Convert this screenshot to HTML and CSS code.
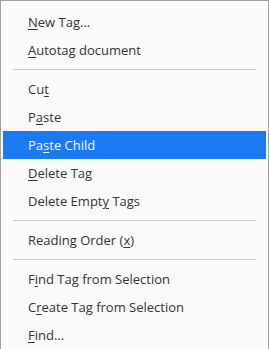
FILE: index.html
```html
<!DOCTYPE html>
<html lang="en">
<head>
    <meta charset="UTF-8">
    <meta name="viewport" content="width=device-width, initial-scale=1.0">
    <title>Tag menu</title>
    <link rel="stylesheet" href="styles.css">
</head>
<body>
    <!-- context menu of the tags panel -->
    <div class="menu">
        <ul>
            <li><u>N</u>ew Tag...</li>
            <li><u>A</u>utotag document</li>
            <li class="sep"></li>
            <li>Cu<u>t</u></li>
            <li>P<u>a</u>ste</li>
            <li class="active">Pa<u>s</u>te Child</li>
            <li><u>D</u>elete Tag</li>
            <li>Delete Empt<u>y</u> Tags</li>
            <li class="sep"></li>
            <li>Reading Order (<u>x</u>)</li>
            <li class="sep"></li>
            <li>F<u>i</u>nd Tag from Selection</li>
            <li>C<u>r</u>eate Tag from Selection</li>
            <li><u>F</u>ind...</li>
        </ul>
    </div>
</body>
</html>
```

FILE: styles.css
```css
html, body {
    margin: 0;
    padding: 0;
    background: #fafafa;
}

.menu {
    width: 267px;
    height: 360px;
    border: 1px solid #a0a0a0;
    background: #fafafa;
    font-family: "Open Sans", "Noto Sans", sans-serif;
    font-size: 13px;
    color: #333;
}

.menu ul {
    list-style: none;
    margin: 0;
    padding: 7px 2px 0 2px;
}

.menu li {
    height: 28px;
    line-height: 28px;
    padding-left: 25px;
    white-space: nowrap;
}

.menu li u {
    text-decoration-thickness: 1px;
    text-underline-offset: 2px;
}

.menu li.active {
    background: #1a7af2;
    color: #f4f8ff;
}

/* separator line between groups */
.menu li.sep {
    height: 1px;
    margin: 5px 10px;
    padding: 0;
    background: #c8c8c8;
}
```
